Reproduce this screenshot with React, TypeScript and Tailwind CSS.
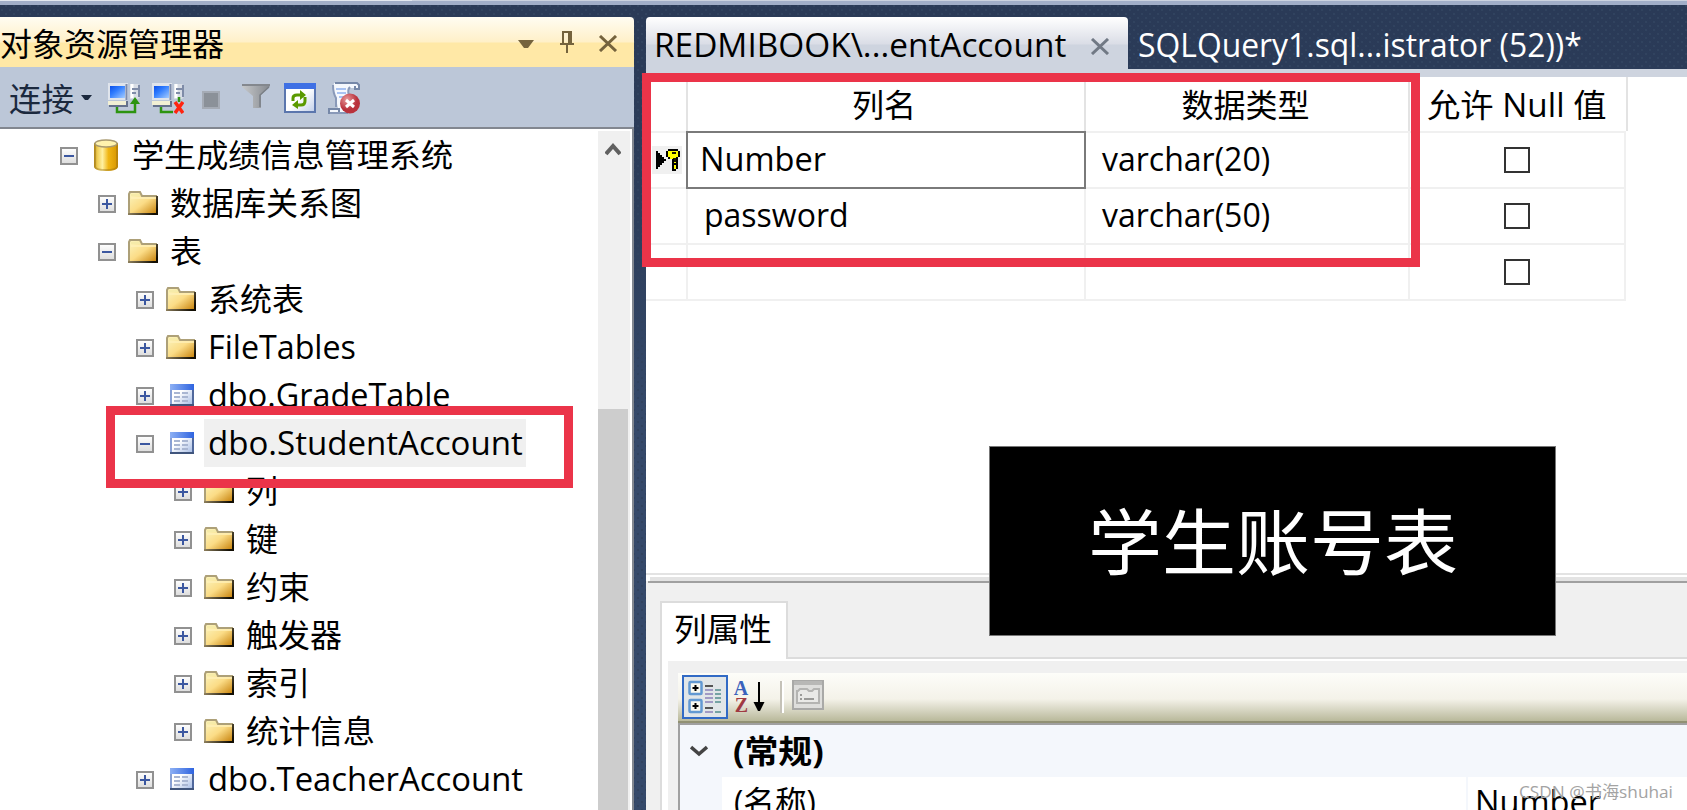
import React, { useLayoutEffect, useRef, useState } from "react";

interface FitTextProps {
  text: string;
  width: number;
  className?: string;
}

// Single line of text, squeezed or stretched to the given width
function FitText({ text, width, className = "" }: FitTextProps) {
  const ref = useRef<HTMLSpanElement>(null);
  const [scale, setScale] = useState(1);

  useLayoutEffect(() => {
    if (ref.current) setScale(width / ref.current.offsetWidth);
  }, [text, width]);

  return (
    <span className="block shrink-0" style={{ width }}>
      <span
        ref={ref}
        className={`inline-block origin-left whitespace-pre ${className}`}
        style={{ transform: `scaleX(${scale})` }}
      >
        {text}
      </span>
    </span>
  );
}

type IconName = "database" | "folder" | "table";

const treeRows: { text: string; level: number; icon: IconName; open?: boolean; selected?: boolean; width: number }[] = [
  { text: "学生成绩信息管理系统", level: 0, icon: "database", open: true, width: 321 },
  { text: "数据库关系图", level: 1, icon: "folder", width: 192 },
  { text: "表", level: 1, icon: "folder", open: true, width: 32 },
  { text: "系统表", level: 2, icon: "folder", width: 96 },
  { text: "FileTables", level: 2, icon: "folder", width: 148 },
  { text: "dbo.GradeTable", level: 2, icon: "table", width: 243 },
  { text: "dbo.StudentAccount", level: 2, icon: "table", open: true, selected: true, width: 315 },
  { text: "列", level: 3, icon: "folder", width: 32 },
  { text: "键", level: 3, icon: "folder", width: 32 },
  { text: "约束", level: 3, icon: "folder", width: 64 },
  { text: "触发器", level: 3, icon: "folder", width: 96 },
  { text: "索引", level: 3, icon: "folder", width: 64 },
  { text: "统计信息", level: 3, icon: "folder", width: 129 },
  { text: "dbo.TeacherAccount", level: 2, icon: "table", width: 315 },
];

const indents = ["pl-[60px]", "pl-[98px]", "pl-[136px]", "pl-[174px]"];

function Expander({ open }: { open?: boolean }) {
  return (
    <svg width="18" height="18" viewBox="0 0 18 18" className="shrink-0" shapeRendering="crispEdges">
      <rect x="1" y="1" width="16" height="16" fill="url(#expander)" stroke="#919191" strokeWidth="2" />
      <path d="M4 9h10" stroke="#3b57a0" strokeWidth="2" />
      {!open && <path d="M9 4v10" stroke="#3b57a0" strokeWidth="2" />}
    </svg>
  );
}

function TreeIcon({ name }: { name: IconName }) {
  if (name === "database") {
    return (
      <svg width="24" height="32" viewBox="0 0 24 32" className="ml-4 mr-[14px] mt-[-2px] shrink-0">
        <path d="M0 4v24q1 4 12 4t12-4V4z" fill="url(#cylinder)" />
        <path d="M1 4v24q1 3 11 3t11-3V4" fill="none" stroke="#8f6a14" strokeOpacity=".4" strokeWidth="2" />
        <ellipse cx="12" cy="4.500" rx="11" ry="3.500" fill="#fff3ae" stroke="#a99a70" strokeWidth="1.500" />
      </svg>
    );
  }
  if (name === "folder") {
    return (
      <svg width="30" height="24" viewBox="0 0 30 24" className="mb-[2px] ml-3 mr-3 shrink-0">
        <path d="M1 23V2h11l2 3h15v18z" fill="url(#folder)" />
        <path d="M3 4h9" stroke="#f6eba9" strokeWidth="2" />
        <path d="M1 23V3l1-2h10l2 4h15" fill="none" stroke="#ada078" strokeWidth="2" />
        <path d="M3 7h25" stroke="#fff0b8" strokeWidth="1.500" />
        <path d="M29 5v18H0" fill="none" stroke="url(#folderEdge)" strokeWidth="2" />
      </svg>
    );
  }
  return (
    <svg width="24" height="22" viewBox="0 0 24 22" className="mb-[2px] ml-4 mr-[14px] shrink-0" shapeRendering="crispEdges">
      <rect width="24" height="22" fill="url(#tableBody)" />
      <rect width="24" height="6" fill="url(#tableHead)" />
      <path d="M1 6v14" stroke="#88a0d4" strokeWidth="2" />
      <path d="M23 6v14" stroke="#50689c" strokeWidth="2" />
      <path d="M0 21h24" stroke="#40557c" strokeWidth="2" />
      <path d="M4 9h6M12 9h6M4 13h6M12 13h6M4 17h6M12 17h6" stroke="#a9b6d2" strokeWidth="2" />
    </svg>
  );
}

function SharedGradients() {
  return (
    <svg className="absolute size-0">
      <defs>
        <linearGradient id="expander" x1="0" y1="0" x2="0" y2="1">
          <stop offset="0" stopColor="#fff" />
          <stop offset="1" stopColor="#dcdcdc" />
        </linearGradient>
        <linearGradient id="cylinder">
          <stop offset="0" stopColor="#c69a1e" />
          <stop offset=".15" stopColor="#f0cf58" />
          <stop offset=".35" stopColor="#fff0a0" />
          <stop offset=".6" stopColor="#f0b614" />
          <stop offset="1" stopColor="#d69500" />
        </linearGradient>
        <linearGradient id="folder" x1="0" y1="0" x2="1" y2="1">
          <stop offset=".1" stopColor="#fbf0b4" />
          <stop offset=".5" stopColor="#fbdc86" />
          <stop offset="1" stopColor="#c57e06" />
        </linearGradient>
        <linearGradient id="folderEdge" gradientUnits="userSpaceOnUse" x1="0" y1="0" x2="30" y2="24">
          <stop offset=".3" stopColor="#a0906a" />
          <stop offset=".9" stopColor="#120e04" />
        </linearGradient>
        <linearGradient id="tableHead">
          <stop offset="0" stopColor="#8db0f4" />
          <stop offset="1" stopColor="#2f64e0" />
        </linearGradient>
        <linearGradient id="tableBody" x1="0" y1="0" x2="1" y2="1">
          <stop offset=".4" stopColor="#fff" />
          <stop offset="1" stopColor="#9db5e2" />
        </linearGradient>
        <linearGradient id="screen" x1="0" y1="0" x2="1" y2="1">
          <stop offset="0" stopColor="#0c50e8" />
          <stop offset=".4" stopColor="#2f7cff" />
          <stop offset="1" stopColor="#a4ccff" />
        </linearGradient>
        <linearGradient id="funnel">
          <stop offset="0" stopColor="#c6c8ca" />
          <stop offset="1" stopColor="#85898f" />
        </linearGradient>
        <linearGradient id="page" x1="0" y1="0" x2="1" y2="1">
          <stop offset=".5" stopColor="#fff" />
          <stop offset="1" stopColor="#bccbe8" />
        </linearGradient>
        <radialGradient id="redBall" cx=".35" cy=".3">
          <stop offset="0" stopColor="#e89a9c" />
          <stop offset="1" stopColor="#b9323c" />
        </radialGradient>
      </defs>
    </svg>
  );
}

function ComputerIcon({ off }: { off?: boolean }) {
  return (
    <svg width="32" height="32" viewBox="0 0 32 32" className="shrink-0">
      <rect x="0" y="1" width="20" height="17" fill="#dfe4ec" />
      <rect x="2" y="4" width="15" height="12" fill="url(#screen)" />
      <path d="M18.500 2v16" stroke="#7d8bab" strokeWidth="2" />
      <path d="M0 19h18v4H0z" fill="#f2f0d4" />
      <path d="M1 24h18v-5" fill="none" stroke="#65718c" strokeWidth="2" />
      <path d="M22 2h8l2 2v11l-2 2h-8z" fill="#d8dde6" />
      <path d="M24 2v14" stroke="#fff" strokeWidth="3" />
      <path d="M31 3v12M24 7h6M24 11h4" stroke="#7f8ca8" strokeWidth="2" />
      {off ? (
        <>
          <path d="M9 25v5h12M27 15v5" fill="none" stroke="#2d9410" strokeWidth="2.500" />
          <path d="M23 20l8 11M31 20l-8 11" stroke="#ff2410" strokeWidth="3.500" />
        </>
      ) : (
        <>
          <path d="M9 25v5h18v-9" fill="none" stroke="#2d9410" strokeWidth="2.500" />
          <path d="M27 15l5 7H22z" fill="#2d9410" />
        </>
      )}
    </svg>
  );
}

function ExplorerToolbar() {
  return (
    <div className="flex h-[60px] items-center bg-[#bcc7d8] pl-[9px] pt-[2px]">
      <FitText text="连接" width={65} className="relative top-px text-[#1b293e]" />
      <svg width="12" height="6" viewBox="0 0 12 6" className="ml-[6px] mr-4 shrink-0">
        <path d="M1 0h11L8 5H5z" fill="#1b293e" />
      </svg>
      <ComputerIcon />
      <div className="w-3" />
      <ComputerIcon off />
      <div className="ml-[18px] mt-[3px] size-[18px] border-2 border-[#a5abb5] bg-[#8b9199]" />
      <svg width="28" height="24" viewBox="0 0 28 24" className="-mt-1 ml-[22px] shrink-0">
        <path d="M0 0h28v2l-9 9v13h-8V12L0 3z" fill="url(#funnel)" />
        <path d="M0 1h28" stroke="#84888e" strokeWidth="2" />
        <path d="M27 3l-9 8v12" fill="none" stroke="#7a7f86" strokeWidth="1.500" />
      </svg>
      <svg width="32" height="30" viewBox="0 0 32 30" className="ml-[14px] shrink-0">
        <rect width="32" height="30" fill="url(#page)" />
        <rect width="32" height="6" fill="#3f70e4" />
        <path d="M1 6v23h30V6" fill="none" stroke="#5b76ad" strokeWidth="2" />
        <path d="M9 18v-3q0-3 4-3h5M21 14v4q0 4-4 4h-5" fill="none" stroke="#5a9a00" strokeWidth="3" />
        <path d="M16 7l6 5-6 5zM14 17l-6 5 6 4z" fill="#5a9a00" />
      </svg>
      <svg width="32" height="32" viewBox="0 0 32 32" className="ml-3 shrink-0">
        <path d="M6 1h24v5h-9q-2 4 0 10v15H1v-5h9l-2-9Q4 8 6 1z" fill="#f5f8fd" />
        <path d="M7 1h22l2 2v4h-4V4M1 27h10v4H1z" fill="none" stroke="#7688a8" strokeWidth="2" />
        <path d="M5 3q0 8 3 13v9M22 5q-3 3-1 8M2 31h18" fill="none" stroke="#8999b8" strokeWidth="2" />
        <path d="M8 7h10M9 11h9M11 15h8" stroke="#a9c3f2" strokeWidth="2" />
        <circle cx="22" cy="21.500" r="10" fill="url(#redBall)" />
        <path d="M18 18l8 7M26 18l-8 7" stroke="#fff" strokeWidth="3" />
      </svg>
    </div>
  );
}

function ObjectExplorer() {
  return (
    <div className="flex w-[634px] shrink-0 flex-col">
      <div className="flex h-[50px] items-center rounded-tr-[4px] bg-[linear-gradient(#fffcf2_0px,#fff0c8_25px,#ffe8a6_26px,#ffe8a6_50px)]">
        <FitText text="对象资源管理器" width={224} className="relative top-[2px]" />
        <svg width="16" height="8" viewBox="0 0 16 8" className="ml-[294px] mt-[3px]">
          <path d="M0 0h16l-6 8H6z" fill="#75633d" />
        </svg>
        <svg width="14" height="22" viewBox="0 0 14 22" className="ml-[26px]" shapeRendering="crispEdges">
          <path d="M3 13V1h8v12M0 13h14M9 1v12M7 13v9" fill="none" stroke="#75633d" strokeWidth="2" />
        </svg>
        <svg width="20" height="17" viewBox="0 0 20 17" className="ml-6 mt-[2px]">
          <path d="M2 1l16 15M18 1L2 16" stroke="#75633d" strokeWidth="3" />
        </svg>
      </div>
      <ExplorerToolbar />
      <div className="flex min-h-0 flex-1 border-r-2 border-t-2 border-[#828790] bg-white pr-[2px]">
        <div className="min-w-0 flex-1 pt-[3px]">
          {treeRows.map((row, index) => (
            <div key={index} className={`flex h-12 items-center ${indents[row.level]}`}>
              <Expander open={row.open} />
              <TreeIcon name={row.icon} />
              <div className={`relative -top-px -ml-1 flex h-12 items-center px-1 ${row.selected ? "bg-[#f0f0f0] pr-[3px]" : ""}`}>
                <FitText text={row.text} width={row.width} />
              </div>
            </div>
          ))}
        </div>
        <div className="mt-[2px] flex w-8 flex-col bg-[#f0f0f0] pr-[2px]">
          <svg width="16" height="14" viewBox="0 0 16 14" className="ml-[7px] mt-[11px]">
            <path d="M1 12l7-8 7 8" fill="none" stroke="#606060" strokeWidth="4" />
          </svg>
          <div className="mt-[253px] flex-1 bg-[#cdcdcd]" />
        </div>
      </div>
    </div>
  );
}

function DocumentTabs() {
  return (
    <div className="flex h-[60px] shrink-0 border-b-8 border-[#ced4df]">
      <div className="flex w-[482px] items-center rounded-t-[4px] bg-[linear-gradient(#ffffff_0px,#dadde6_27px,#ced4df_28px,#ced4df_52px)] pl-2">
        <FitText text={"REDMIBOOK\\...entAccount"} width={412} className="relative top-[2px]" />
        <svg width="20" height="17" viewBox="0 0 20 17" className="ml-6 mt-[7px]">
          <path d="M2 1l16 15M18 1L2 16" stroke="#717985" strokeWidth="3" />
        </svg>
      </div>
      <div className="flex items-center pl-[10px] text-white">
        <FitText text="SQLQuery1.sql...istrator (52))*" width={444} className="relative top-[2px]" />
      </div>
    </div>
  );
}

const columns = [
  { name: "Number", nameWidth: 126, type: "varchar(20)", selected: true },
  { name: "password", nameWidth: 145, type: "varchar(50)" },
  { name: "", nameWidth: 0, type: "" },
];

function KeyMarker() {
  return (
    <div className="flex h-7 w-[30px] items-center bg-[#f0f0f0] pl-1">
      <svg width="26" height="22" viewBox="0 0 26 22" shapeRendering="crispEdges">
        <path d="M0 2h2v2h2v2h2v2h2v2h2v2H8v2H6v2H4v2H2v2H0z" fill="#000" />
        <path d="M12 0h10v2h2v6h-2v12h-2v2h-4V10h-4V8h-2V2h2z" fill="#000" />
        <path d="M12 2h10v6h-2v2h-2v2h2v2h-2v2h2v4h-2v-10h-4V8h-2z" fill="#ffff00" />
        <path d="M18 10h2v2h-2zM16 4h4M20 13h2M20 17h2" stroke="#000" strokeWidth="2" fill="#ffff00" strokeOpacity=".9" />
      </svg>
    </div>
  );
}

function ColumnGrid() {
  return (
    <div className="flex h-[496px] shrink-0 flex-col bg-white">
      <div className="flex h-[54px] w-[982px] pt-0">
        <div className="w-[42px] border-r-2 border-[#e3e3e3]" />
        <div className="flex w-[398px] items-center justify-center border-r-2 border-[#e3e3e3] pr-1">
          <FitText text="列名" width={64} className="relative top-px" />
        </div>
        <div className="flex w-[324px] items-center justify-center border-r-2 border-[#e3e3e3] pr-[3px]">
          <FitText text="数据类型" width={128} className="relative top-px" />
        </div>
        <div className="flex w-[218px] items-center border-r-2 border-[#e3e3e3] pl-[17px]">
          <FitText text="允许 Null 值" width={180} className="relative top-px" />
        </div>
      </div>
      <div className="w-[980px] border-b-2 border-[#f0f0f0]">
        {columns.map((column, index) => (
          <div key={index} className="flex h-14 border-t-2 border-[#f0f0f0]">
            <div className="flex w-[42px] items-center border-r-2 border-[#f0f0f0] pl-[6px]">
              {column.selected && <KeyMarker />}
            </div>
            <div
              className={
                column.selected
                  ? "z-10 -ml-[2px] -mt-[2px] flex h-[58px] w-[400px] items-center border-2 border-[#7a7a7a] pl-3"
                  : "flex w-[398px] items-center border-r-2 border-[#f0f0f0] pl-4"
              }
            >
              {column.name && <FitText text={column.name} width={column.nameWidth} className="relative -top-px" />}
            </div>
            <div className="flex w-[324px] items-center border-r-2 border-[#f0f0f0] pl-4">
              {column.type && <FitText text={column.type} width={168} className="relative -top-px" />}
            </div>
            <div className="flex w-[216px] items-center border-r-2 border-[#f0f0f0] pl-[94px]">
              <div className="size-[26px] border-2 border-[#333333] bg-white" />
            </div>
          </div>
        ))}
      </div>
    </div>
  );
}

function PropertyToolbar() {
  return (
    <div className="flex h-[50px] items-center border-b-2 border-[#919174] bg-[linear-gradient(#fdfdf9_0px,#f4f2e9_26px,#b9b99b_48px)] pl-1">
      <div className="flex h-11 w-[46px] items-center justify-center border-2 border-[#316ac5] bg-[#e1e6e8]">
        <svg width="34" height="34" viewBox="0 0 34 34">
          <rect x="1.500" y="2" width="12" height="12" rx="1" fill="#fbfaf0" stroke="#6299d2" strokeWidth="2.500" />
          <rect x="1.500" y="20" width="12" height="12" rx="1" fill="#fbfaf0" stroke="#6299d2" strokeWidth="2.500" />
          <path d="M4.500 8h6M7.500 5v6M4.500 26h6M7.500 23v6" stroke="#000" strokeWidth="2" />
          <path d="M17 6h8M17 28h8" stroke="#555" strokeWidth="2" />
          <path d="M17 10h8M17 14h8M17 18h8M17 22h8M17 32h8" stroke="#a09ac4" strokeWidth="2" />
          <path d="M27 10h6M27 14h6M27 18h6M27 22h6M27 32h6" stroke="#76a4a4" strokeWidth="2" />
        </svg>
      </div>
      <svg width="34" height="34" viewBox="0 0 34 34" className="ml-[5px]">
        <text x="8" y="15" textAnchor="middle" className="fill-[#3a62bc] font-['Liberation_Serif',serif] text-[20px] font-bold">
          A
        </text>
        <text x="8.500" y="32" textAnchor="middle" className="fill-[#a03a42] font-['Liberation_Serif',serif] text-[20px] font-bold">
          Z
        </text>
        <path d="M26 2v24" stroke="#000" strokeWidth="2" />
        <path d="M20.500 22l11 0-4.500 9h-2z" fill="#000" />
      </svg>
      <div className="ml-[13px] h-8 w-1 border-l-2 border-r-2 border-l-[#c5c2b8] border-r-white" />
      <svg width="32" height="30" viewBox="0 0 32 30" className="-mt-1 ml-2">
        <rect x="1" y="1" width="30" height="28" fill="#dededc" stroke="#a9a9a7" strokeWidth="2" />
        <path d="M2 3h28" stroke="#b8b8b6" strokeWidth="4" />
        <path d="M5 23V11h1l2-2h7l2 2h3l2-2h5v14z" fill="#e9e9e7" stroke="#b4b4b2" strokeWidth="2" />
        <path d="M8 15h2M8 19h2M12 19h10" stroke="#9a9a98" strokeWidth="2" />
      </svg>
    </div>
  );
}

function ColumnProperties() {
  return (
    <div className="flex min-h-0 flex-1 flex-col bg-[#f0f0f0]">
      <div className="h-2 shrink-0 border-t-2 border-[#e3e3e3] bg-white pt-[2px]">
        <div className="ml-1 h-1 bg-[#e3e3e3]" />
      </div>
      <div className="ml-[2px] h-[2px] shrink-0 bg-[#a0a0a0]" />
      <div className="ml-[14px] mt-[18px] flex h-[58px] shrink-0">
        <div className="flex w-32 items-center border-x-2 border-t-2 border-[#dcdcdc] bg-white pl-3">
          <FitText text="列属性" width={98} className="relative -top-[2px]" />
        </div>
        <div className="flex-1 border-b-2 border-[#dcdcdc]" />
      </div>
      <div className="ml-[14px] flex min-h-0 flex-1 flex-col border-l-2 border-[#dcdcdc] bg-white pl-[6px] pt-[2px]">
        <div className="flex min-h-0 flex-1 flex-col bg-[#f0f0f0] pl-[10px] pt-3">
          <PropertyToolbar />
          <div className="min-h-0 flex-1 overflow-hidden border-l-2 border-t-2 border-[#a0a0a0] bg-[#f4f7fc]">
            <div className="flex h-[52px] items-center pl-[10px]">
              <svg width="18" height="12" viewBox="0 0 18 12">
                <path d="M1 2l8 7 8-7" fill="none" stroke="#444" strokeWidth="3.500" />
              </svg>
              <div className="ml-[25px]">
                <FitText text="(常规)" width={91} className="font-bold" />
              </div>
            </div>
            <div className="ml-[42px] flex h-[52px] bg-white">
              <div className="flex w-[746px] items-center border-r-2 border-[#f4f7fc] pl-3">
                <FitText text="(名称)" width={82} className="relative -top-px" />
              </div>
              <div className="flex items-center pl-[7px]">
                <FitText text="Number" width={126} className="relative -top-px" />
              </div>
            </div>
          </div>
        </div>
      </div>
    </div>
  );
}

export default function App() {
  return (
    <div className="relative flex h-[810px] w-[1687px] flex-col overflow-hidden bg-[radial-gradient(circle_at_2px_2px,#31435f_1.4px,transparent_1.5px),radial-gradient(circle_at_6px_6px,#31435f_1.4px,transparent_1.5px),linear-gradient(#2a3a57,#2c3d5a_200px,#35496a_420px)] bg-[length:8px_8px,8px_8px,100%_100%] font-['Open_Sans','Noto_Sans_CJK_SC',sans-serif] text-[32px] leading-[40px] text-black">
      <SharedGradients />
      <div className="mb-3 h-[5px] shrink-0 border-t border-[#cbd2df] bg-[#a1aec8]">
        <div className="-mt-px h-px w-[412px] bg-[#e3e8f0]" />
      </div>
      <div className="flex min-h-0 flex-1 gap-3">
        <ObjectExplorer />
        <div className="flex min-w-0 flex-1 flex-col">
          <DocumentTabs />
          <ColumnGrid />
          <ColumnProperties />
        </div>
      </div>

      {/* Highlight frames and caption drawn over the windows */}
      <div className="absolute left-[642px] top-[73px] z-20 h-[194px] w-[778px] border-[9px] border-[#eb3449]" />
      <div className="absolute left-[106px] top-[406px] z-20 h-[82px] w-[467px] border-[9px] border-[#eb3449]" />
      <div className="absolute left-[989px] top-[446px] z-20 flex h-[190px] w-[567px] items-center justify-center border border-[#777777] bg-black text-[72px] leading-[72px] text-white">
        <FitText text="学生账号表" width={370} />
      </div>
      <div className="absolute left-[1519px] top-[780px] z-20 text-[17px] leading-6 text-[#a3a3a3]">
        <FitText text="CSDN @书海shuhai" width={154} />
      </div>
    </div>
  );
}
